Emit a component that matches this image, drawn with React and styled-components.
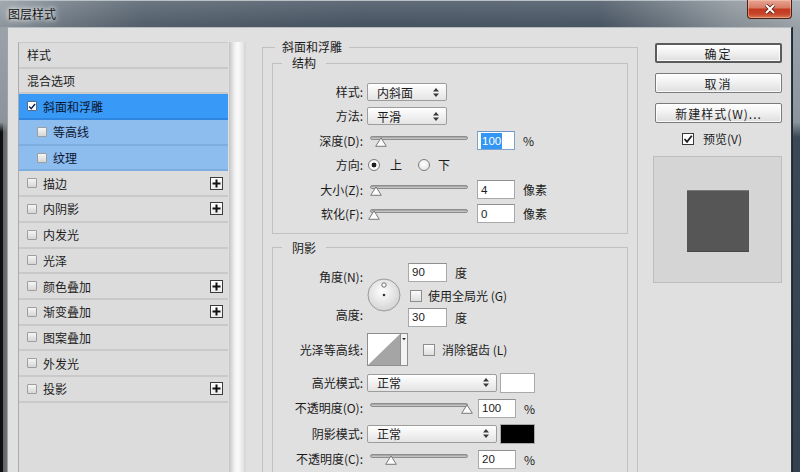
import styled, { createGlobalStyle } from "styled-components";

const GlobalStyle = createGlobalStyle`
  html, body {
    margin: 0;
    padding: 0;
    overflow: hidden;
  }
  body {
    font-family: "Noto Sans CJK SC", "Liberation Sans", sans-serif;
    font-size: 12px;
    color: #1b1b1b;
  }
`;

const listItems = [
  { label: "样式", plain: true },
  { label: "混合选项", plain: true },
  { label: "斜面和浮雕", checked: true, state: "active" },
  { label: "等高线", sub: true, state: "sub" },
  { label: "纹理", sub: true, state: "sub" },
  { label: "描边", plus: true },
  { label: "内阴影", plus: true },
  { label: "内发光" },
  { label: "光泽" },
  { label: "颜色叠加", plus: true },
  { label: "渐变叠加", plus: true },
  { label: "图案叠加" },
  { label: "外发光" },
  { label: "投影", plus: true },
];

const UpDown = () => (
  <svg width="6" height="9" viewBox="0 0 6 9">
    <path d="M3 0 L6 3.5 H0 Z M3 9 L0 5.5 H6 Z" fill="#3a3a3a" />
  </svg>
);

const CheckMark = ({ color = "#1d1d1d" }) => (
  <svg width="10" height="10" viewBox="0 0 10 10">
    <path d="M1.5 5 L4 7.8 L8.8 1.8" fill="none" stroke={color} strokeWidth="1.8" />
  </svg>
);

const PlusIcon = () => (
  <svg width="9" height="9" viewBox="0 0 9 9">
    <path d="M4.5 0.5 V8.5 M0.5 4.5 H8.5" stroke="#111" strokeWidth="2" />
  </svg>
);

const Dial = () => (
  <svg width="34" height="34" viewBox="0 0 34 34">
    <defs>
      <radialGradient id="dialFill" cx="45%" cy="40%" r="65%">
        <stop offset="0" stopColor="#ffffff" />
        <stop offset="1" stopColor="#d0d0d0" />
      </radialGradient>
    </defs>
    <circle cx="17" cy="17" r="16" fill="url(#dialFill)" stroke="#9a9a9a" />
    <circle cx="17" cy="7" r="2.2" fill="#fff" stroke="#6b6b6b" />
    <circle cx="17" cy="17" r="1.3" fill="#333" />
  </svg>
);

const Contour = () => (
  <svg width="41" height="33" viewBox="0 0 41 33">
    <rect x="0.5" y="0.5" width="33" height="32" fill="#fff" stroke="#8e8e8e" />
    <polygon points="1,32 33,1 33,32" fill="#a5a5a5" />
    <rect x="33.5" y="0.5" width="7" height="32" fill="#f3f3f3" stroke="#8e8e8e" />
    <path d="M35.2 5 H38.8 L37 7.2 Z" fill="#222" />
  </svg>
);

const ThumbShape = () => (
  <svg width="12" height="10" viewBox="0 0 12 10">
    <path d="M6 0.8 L11.3 9.3 H0.7 Z" fill="#fbfbfb" stroke="#7a7a7a" strokeLinejoin="round" />
  </svg>
);

const Slider = ({ pos }) => (
  <SliderBox>
    <Track />
    <Thumb style={{ left: pos }}>
      <ThumbShape />
    </Thumb>
  </SliderBox>
);

export default function App() {
  return (
    <>
      <GlobalStyle />
      <Window>
        <TitleBar>
          <Title>图层样式</Title>
          <CloseButton>
            <svg width="12" height="10" viewBox="0 0 12 10">
              <path d="M2 1 L10 9 M10 1 L2 9" stroke="#5a2015" strokeWidth="3.6" />
              <path d="M2 1 L10 9 M10 1 L2 9" stroke="#fff" strokeWidth="2" />
            </svg>
          </CloseButton>
        </TitleBar>
        <Body>
          <FrameEdge $side="left" />
          <Client>
            <LeftPanel>
              <StyleList>
                {listItems.map((item) => (
                  <ListRow key={item.label} $state={item.state} $sub={item.sub}>
                    {!item.plain && (
                      <ListCheck $checked={item.checked}>
                        {item.checked && <CheckMark color="#10204a" />}
                      </ListCheck>
                    )}
                    <span>{item.label}</span>
                    {item.plus && (
                      <PlusButton>
                        <PlusIcon />
                      </PlusButton>
                    )}
                  </ListRow>
                ))}
              </StyleList>
              <Scrollbar />
            </LeftPanel>

            <Middle>
              <Group $outer>
                <Legend $ml={3} $px={7}>斜面和浮雕</Legend>
                <Group $pad="12px 0 9px" $mt={0}>
                  <Legend $ml={9} $px={10}>结构</Legend>
                  <Rows $gap={4.4}>
                    <Row>
                      <Label>样式:</Label>
                      <Select $w={80}>
                        <span>内斜面</span>
                        <UpDown />
                      </Select>
                    </Row>
                    <Row>
                      <Label>方法:</Label>
                      <Select $w={80}>
                        <span>平滑</span>
                        <UpDown />
                      </Select>
                    </Row>
                    <Row>
                      <Label>深度(D):</Label>
                      <Slider pos={5} />
                      <NumberBox $focused>
                        <Selected>100</Selected>
                      </NumberBox>
                      <Unit>%</Unit>
                    </Row>
                    <Row>
                      <Label>方向:</Label>
                      <Radio $checked $ml={1} />
                      <OptionText $ml={10}>上</OptionText>
                      <Radio $ml={16} />
                      <OptionText $ml={8}>下</OptionText>
                    </Row>
                    <Row>
                      <Label>大小(Z):</Label>
                      <Slider pos={0} />
                      <NumberBox>4</NumberBox>
                      <Unit>像素</Unit>
                    </Row>
                    <Row>
                      <Label>软化(F):</Label>
                      <Slider pos={-2} />
                      <NumberBox>0</NumberBox>
                      <Unit>像素</Unit>
                    </Row>
                  </Rows>
                </Group>

                <Group $pad="8px 0 40px" $mt={7} $open>
                  <Legend $ml={9} $px={10}>阴影</Legend>
                  <Rows $gap={5.5}>
                    <AngleBlock>
                      <LabelStack>
                        <Label>角度(N):</Label>
                        <Label>高度:</Label>
                      </LabelStack>
                      <DialWrap>
                        <Dial />
                      </DialWrap>
                      <AngleFields>
                        <FieldLine>
                          <NumberBox $w={39} $ml={0}>90</NumberBox>
                          <Unit>度</Unit>
                        </FieldLine>
                        <CheckLine>
                          <Box $ml={2} />
                          <OptionText $ml={6}>使用全局光 (G)</OptionText>
                        </CheckLine>
                        <FieldLine>
                          <NumberBox $w={39} $ml={0}>30</NumberBox>
                          <Unit>度</Unit>
                        </FieldLine>
                      </AngleFields>
                    </AngleBlock>
                    <Row $h={32} $my={1.5}>
                      <Label>光泽等高线:</Label>
                      <Contour />
                      <Box $ml={15} />
                      <OptionText $ml={7}>消除锯齿 (L)</OptionText>
                    </Row>
                    <Row>
                      <Label>高光模式:</Label>
                      <Select $w={130}>
                        <span>正常</span>
                        <UpDown />
                      </Select>
                      <Swatch $color="#ffffff" />
                    </Row>
                    <Row>
                      <Label>不透明度(O):</Label>
                      <Slider pos={91} />
                      <NumberBox $ml={10}>100</NumberBox>
                      <Unit>%</Unit>
                    </Row>
                    <Row>
                      <Label>阴影模式:</Label>
                      <Select $w={130}>
                        <span>正常</span>
                        <UpDown />
                      </Select>
                      <Swatch $color="#000000" />
                    </Row>
                    <Row>
                      <Label>不透明度(C):</Label>
                      <Slider pos={15} />
                      <NumberBox $ml={10}>20</NumberBox>
                      <Unit>%</Unit>
                    </Row>
                  </Rows>
                </Group>
              </Group>
            </Middle>

            <Side>
              <Button $primary>确定</Button>
              <Button>取消</Button>
              <Button $spacing={1}>新建样式(W)...</Button>
              <PreviewToggle>
                <Box $white>
                  <CheckMark />
                </Box>
                <OptionText $ml={9}>预览(V)</OptionText>
              </PreviewToggle>
              <PreviewBox>
                <PreviewSquare />
              </PreviewBox>
            </Side>
          </Client>
          <FrameEdge $side="right" />
        </Body>
      </Window>
    </>
  );
}

const Window = styled.div`
  width: 800px;
  height: 472px;
  display: flex;
  flex-direction: column;
  overflow: hidden;
`;

const TitleBar = styled.div`
  height: 27px;
  flex-shrink: 0;
  display: flex;
  justify-content: space-between;
  align-items: flex-start;
  background:
    linear-gradient(rgba(255, 255, 255, 0.12), rgba(0, 0, 0, 0.06)),
    linear-gradient(
      90deg,
      #969fa7 0%,
      #737e89 7%,
      #56636f 18%,
      #4a5765 45%,
      #4c5967 75%,
      #6f7a84 84%,
      #8d969d 91%,
      #a3abb1 100%
    );
  border-top: 1px solid #b9c0c6;
  box-sizing: border-box;
`;

const Title = styled.div`
  margin: 5px 0 0 8px;
  font-size: 12px;
  line-height: 16px;
  color: #141414;
  text-shadow: 0 0 4px #ffffff, 0 0 8px rgba(255, 255, 255, 0.9);
`;

const CloseButton = styled.div`
  width: 45px;
  height: 19px;
  margin: -1px 8px 0 0;
  box-sizing: border-box;
  display: flex;
  align-items: center;
  justify-content: center;
  border: 1px solid #4b2119;
  border-top: none;
  border-radius: 0 0 4px 4px;
  background: linear-gradient(
    #e8a494 0%,
    #d97d66 42%,
    #c33a20 52%,
    #c5452a 78%,
    #dc7b52 100%
  );
  box-shadow: inset 0 0 0 1px rgba(255, 210, 190, 0.45);
`;

const Body = styled.div`
  flex: 1;
  display: flex;
  min-height: 0;
`;

const FrameEdge = styled.div`
  flex-shrink: 0;
  width: ${(p) => (p.$side === "left" ? 7 : 8)}px;
  background: ${(p) =>
    p.$side === "left"
      ? "linear-gradient(#9ba3aa 0, #8b949b 95px, rgba(0,0,0,0) 105px), linear-gradient(90deg, #0e0e0e 0, #0e0e0e 3px, #5f6368 3px, #6e7276 7px)"
      : "linear-gradient(90deg, #1f2a34 0, #1f2a34 1px, transparent 1px), linear-gradient(#98a1a8 0, #8c959d 95px, #3b4957 110px, #34424f 100%)"};
`;

const Client = styled.div`
  flex: 1;
  display: flex;
  align-items: flex-start;
  background: #e0e0e0;
  border-left: 1px solid #a3a3a3;
  border-right: 1px solid #2a343d;
  border-top: 1px solid #b7bcc0;
  overflow: hidden;
  min-width: 0;
`;

const LeftPanel = styled.div`
  align-self: stretch;
  display: flex;
  gap: 1px;
  width: 228px;
  margin: 14px 0 0 10px;
  flex-shrink: 0;
`;

const StyleList = styled.div`
  flex: 1;
  background: #dcdcdc;
  border-left: 1px solid #ababab;
  border-top: 1px solid #c9c9c9;
`;

const ListRow = styled.div`
  height: 25.7px;
  box-sizing: border-box;
  display: flex;
  align-items: center;
  padding-left: ${(p) => (p.$sub ? 18 : 8)}px;
  padding-right: 5px;
  border-bottom: 2px solid
    ${(p) => (p.$state === "active" ? "#2f86e0" : p.$state === "sub" ? "#7eaee0" : "#c9c9c9")};
  background: ${(p) =>
    p.$state === "active" ? "#3899f6" : p.$state === "sub" ? "#8dbcef" : "transparent"};
  color: ${(p) => (p.$state ? "#0c1630" : "#1c1c1c")};
  white-space: nowrap;
`;

const ListCheck = styled.span`
  width: 10px;
  height: 10px;
  box-sizing: border-box;
  margin-right: 6px;
  display: flex;
  align-items: center;
  justify-content: center;
  border: 1px solid ${(p) => (p.$checked ? "#5a6a80" : "#9e9e9e")};
  border-radius: 1px;
  background: ${(p) => (p.$checked ? "#ffffff" : "linear-gradient(#f6f6f6, #d6d6d6)")};
  & svg {
    width: 9px;
    height: 9px;
  }
`;

const PlusButton = styled.span`
  margin-left: auto;
  width: 13px;
  height: 13px;
  box-sizing: border-box;
  display: flex;
  align-items: center;
  justify-content: center;
  border: 1px solid #3c3c3c;
  background: linear-gradient(#ffffff, #ececec);
`;

const Scrollbar = styled.div`
  width: 16px;
  flex-shrink: 0;
  border-left: 1px solid #c6c6c6;
  background: linear-gradient(90deg, #cdcdcd 0%, #f2f2f2 30%, #fbfbfb 50%, #e6e6e6 80%, #d2d2d2 100%);
`;

const Middle = styled.div`
  align-self: stretch;
  width: 376px;
  flex-shrink: 0;
  margin: 8px 0 0 16px;
  padding-top: 4px;
  overflow: hidden;
`;

const Group = styled.fieldset`
  margin: ${(p) => (p.$outer ? 0 : `${p.$mt}px 0 0`)};
  min-width: 0;
  padding: ${(p) => (p.$outer ? "2px 9px 0" : p.$pad)};
  border: 1px solid #c1c1c1;
  border-bottom: ${(p) => (p.$outer || p.$open ? "none" : "1px solid #c1c1c1")};
`;

const Legend = styled.legend`
  margin-left: ${(p) => p.$ml}px;
  padding: 0 ${(p) => p.$px}px;
  font-size: 12px;
  line-height: 14px;
  color: #1b1b1b;
`;

const Rows = styled.div`
  display: flex;
  flex-direction: column;
  gap: ${(p) => p.$gap}px;
`;

const Row = styled.div`
  display: flex;
  align-items: center;
  height: ${(p) => p.$h || 20}px;
  margin: ${(p) => p.$my || 0}px 0;
`;

const Label = styled.div`
  width: 94px;
  flex-shrink: 0;
  box-sizing: border-box;
  padding-right: 4px;
  text-align: right;
  white-space: nowrap;
  line-height: 14px;
`;

const Select = styled.div`
  width: ${(p) => p.$w}px;
  height: 18px;
  box-sizing: border-box;
  display: flex;
  align-items: center;
  justify-content: space-between;
  padding: 0 7px 0 9px;
  border: 1px solid #9d9d9d;
  border-radius: 2px;
  background: linear-gradient(#ffffff, #f1f1f1 50%, #e4e4e4);
  white-space: nowrap;
`;

const SliderBox = styled.div`
  position: relative;
  width: 98px;
  height: 12px;
  margin: 2px 0 0 3px;
  flex-shrink: 0;
`;

const Track = styled.div`
  height: 4px;
  box-sizing: border-box;
  border: 1px solid #8d8d8d;
  border-radius: 3px;
  background: linear-gradient(#9d9d9d, #cfcfcf);
`;

const Thumb = styled.div`
  position: absolute;
  top: 1px;
  width: 12px;
  height: 10px;
  line-height: 0;
`;

const NumberBox = styled.div`
  width: ${(p) => p.$w || 38}px;
  height: 19px;
  box-sizing: border-box;
  margin-left: ${(p) => (p.$ml === undefined ? 9 : p.$ml)}px;
  padding-left: 3px;
  display: flex;
  align-items: center;
  font-family: "Liberation Sans", "Noto Sans CJK SC", sans-serif;
  font-size: 11.5px;
  background: #ffffff;
  border: 1px solid ${(p) => (p.$focused ? "#7ea3cf" : "#a9a9a9")};
  border-top-color: ${(p) => (p.$focused ? "#6d93c2" : "#8f8f8f")};
`;

const Selected = styled.span`
  background: #3395f4;
  color: #ffffff;
  padding: 1px 1px;
  line-height: 14px;
`;

const Unit = styled.span`
  margin-left: 8px;
  white-space: nowrap;
`;

const Radio = styled.span`
  width: 12px;
  height: 12px;
  box-sizing: border-box;
  margin-left: ${(p) => p.$ml}px;
  border-radius: 50%;
  border: 1px solid #7d7d7d;
  background: ${(p) =>
    p.$checked
      ? "radial-gradient(circle, #1f1f1f 0 2.2px, #ffffff 2.7px, #e4e4e4 100%)"
      : "radial-gradient(circle at 45% 40%, #ffffff, #dedede)"};
  flex-shrink: 0;
`;

const OptionText = styled.span`
  margin-left: ${(p) => p.$ml}px;
  white-space: nowrap;
  line-height: 14px;
`;

const Box = styled.span`
  width: 12px;
  height: 12px;
  box-sizing: border-box;
  margin-left: ${(p) => p.$ml || 0}px;
  flex-shrink: 0;
  display: flex;
  align-items: center;
  justify-content: center;
  border: 1px solid ${(p) => (p.$white ? "#3a3a3a" : "#8d8d8d")};
  background: ${(p) => (p.$white ? "#ffffff" : "linear-gradient(#fbfbfb, #dedede)")};
`;

const AngleBlock = styled.div`
  display: flex;
  height: 64px;
`;

const LabelStack = styled.div`
  display: flex;
  flex-direction: column;
  justify-content: space-between;
  padding: 7px 0 5px;
`;

const DialWrap = styled.div`
  align-self: center;
  line-height: 0;
`;

const AngleFields = styled.div`
  display: flex;
  flex-direction: column;
  margin-left: 7px;
`;

const FieldLine = styled.div`
  display: flex;
  align-items: center;
  height: 19px;
`;

const CheckLine = styled.div`
  display: flex;
  align-items: center;
  height: 12px;
  margin: 8px 0 6px;
`;

const Swatch = styled.div`
  width: 35px;
  height: 20px;
  box-sizing: border-box;
  margin-left: 3px;
  border: 1px solid #a9a9a9;
  background: ${(p) => p.$color};
`;

const Side = styled.div`
  width: 127px;
  flex-shrink: 0;
  margin: 15px 0 0 17px;
  display: flex;
  flex-direction: column;
`;

const Button = styled.div`
  height: 20px;
  box-sizing: border-box;
  margin-bottom: 10px;
  display: flex;
  align-items: center;
  justify-content: center;
  letter-spacing: ${(p) => (p.$spacing !== undefined ? p.$spacing : 2)}px;
  border: ${(p) => (p.$primary ? "2px solid #5b5b5b" : "1px solid #7b7b7b")};
  border-radius: 2px;
  background: linear-gradient(#ffffff, #f0f0f0 50%, #dedede);
  box-shadow: inset 0 0 0 1px rgba(255, 255, 255, 0.8);
  white-space: nowrap;
`;

const PreviewToggle = styled.div`
  display: flex;
  align-items: center;
  height: 13px;
  margin-top: -1px;
  padding-left: 27px;
`;

const PreviewBox = styled.div`
  width: 129px;
  height: 127px;
  box-sizing: border-box;
  margin: 11px 0 0 -2px;
  display: flex;
  align-items: center;
  justify-content: center;
  background: #d5d5d5;
  border: 1px solid #bdbdbd;
`;

const PreviewSquare = styled.div`
  width: 62px;
  height: 62px;
  margin-top: 3px;
  background: #565656;
  box-shadow: inset 0 1px 0 #7a7a7a, inset 0 -1px 0 #474747;
`;
